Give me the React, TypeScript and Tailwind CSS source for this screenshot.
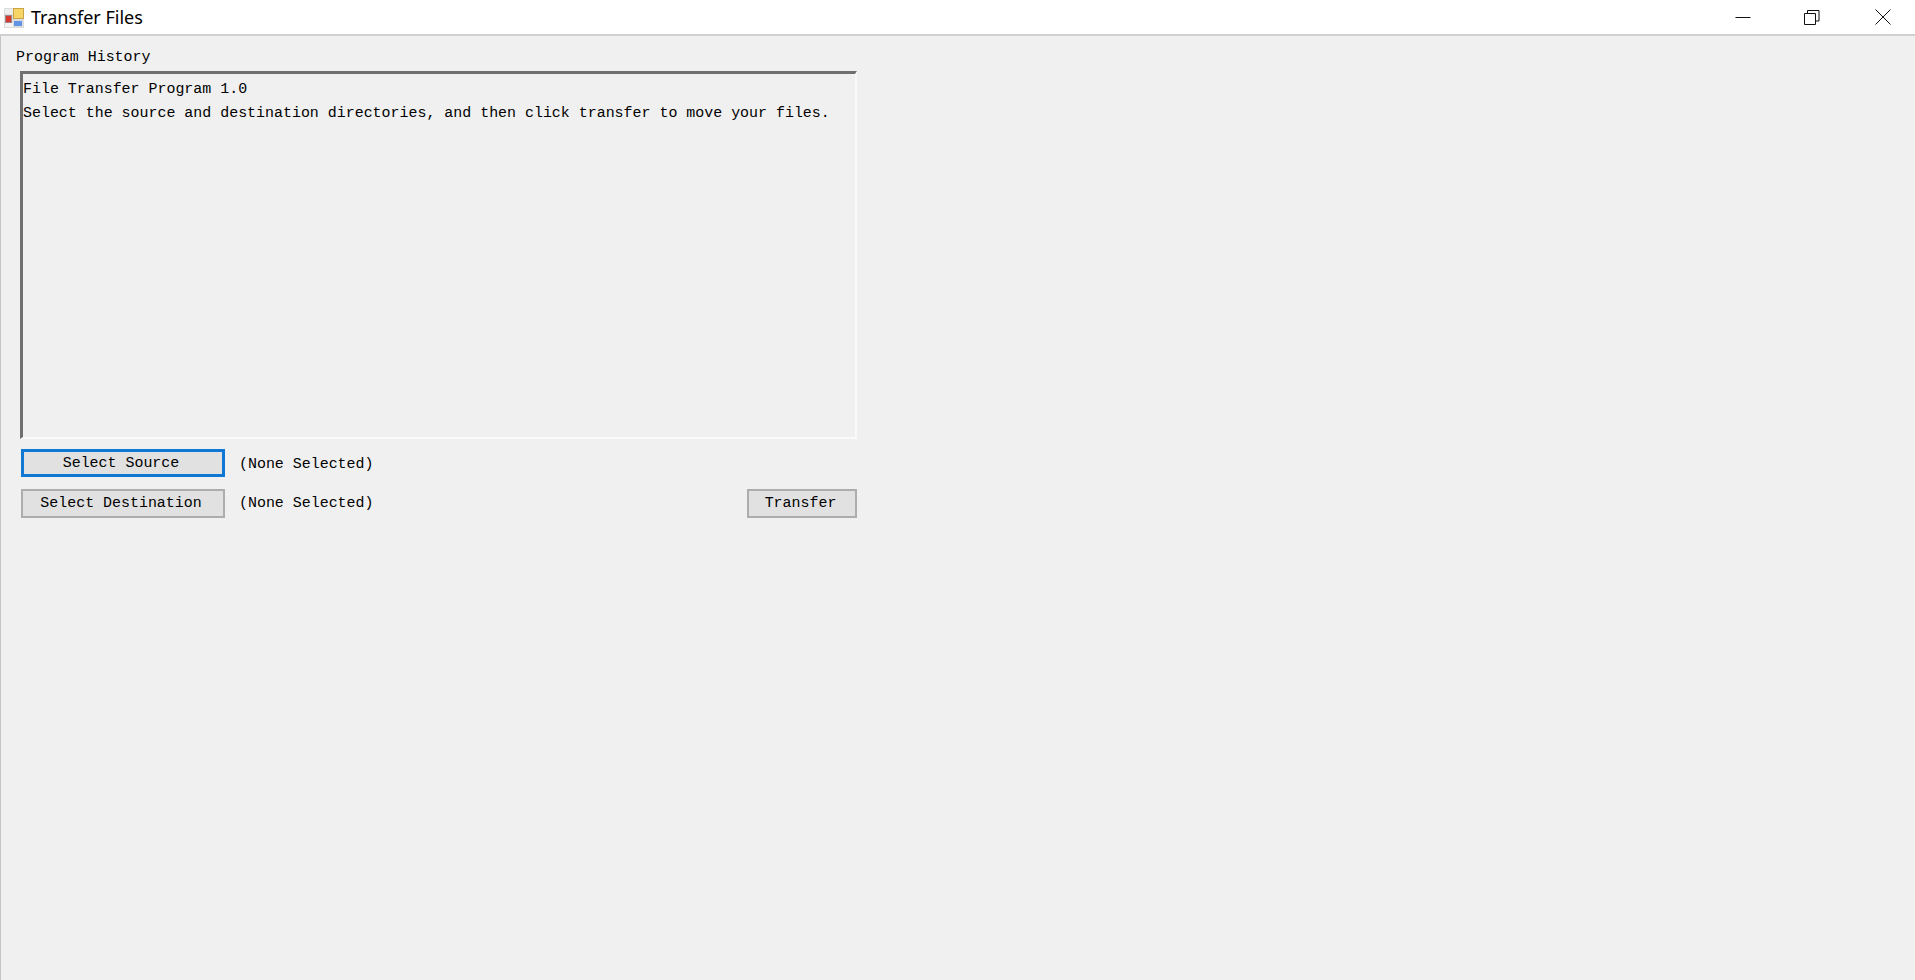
export default function App() {
  const mono = "font-['Liberation_Mono',monospace] text-[14.95px] text-black whitespace-pre";
  const btn = "h-[29px] border-2 border-[#adadad] bg-[#e1e1e1] flex items-center justify-center " + mono;
  return (
    <div className="w-[1915px] h-[980px] flex flex-col bg-[#f0f0f0] overflow-hidden">
      <div className="h-[36px] shrink-0 bg-white border-b-2 border-[#d0d0d0] flex items-center">
        <svg width="22" height="22" viewBox="0 0 22 22" className="ml-[3px] mt-[1px]">
          <rect x="1" y="1" width="20" height="20" fill="#dcdcdc" />
          <rect x="2" y="2" width="8" height="5" fill="#eeeeee" />
          <rect x="2" y="16" width="8" height="4" fill="#f4f4f4" />
          <rect x="2.5" y="8.5" width="6" height="7" fill="#d9362c" stroke="#9c8a8a" />
          <rect x="10.5" y="1.5" width="10" height="10" fill="#f6d465" stroke="#c9a545" />
          <rect x="11" y="14" width="8" height="5" fill="#5f95e2" />
        </svg>
        <span className="ml-[6px] font-['Noto_Sans',sans-serif] text-[18px] text-black">Transfer Files</span>
        <div className="ml-auto flex items-center">
          <div className="w-[70px] h-[34px] flex items-center justify-center">
            <svg width="16" height="16" viewBox="0 0 16 16"><path d="M0.5 8.5H15.5" stroke="#111" fill="none" /></svg>
          </div>
          <div className="w-[68px] h-[34px] flex items-center justify-center">
            <svg width="16" height="16" viewBox="0 0 16 16"><path d="M0.5 4.5H11.5V15.5H0.5ZM3.5 4.5V1.5H15V12H11.5" stroke="#111" fill="none" /></svg>
          </div>
          <div className="w-[64px] ml-[5px] h-[34px] flex items-center justify-center">
            <svg width="16" height="16" viewBox="0 0 16 16"><path d="M0.5 0.5L15.5 15.5M15.5 0.5L0.5 15.5" stroke="#111" fill="none" /></svg>
          </div>
        </div>
      </div>
      <div className="flex-1 border-l border-[#c4c4c4] pl-[15px] pt-[11px] flex flex-col items-start">
        <div className={mono + " leading-[20px]"}>Program History</div>
        <div className="ml-[4px] mt-[4px] w-[837px] h-[368px] border-2 border-t-[3px] border-l-[3px] border-t-[#707070] border-l-[#707070] border-r-[#fafafa] border-b-[#fafafa] pt-[3px]">
          <div className={mono + " leading-[24px]"}>File Transfer Program 1.0</div>
          <div className={mono + " leading-[24px]"}>Select the source and destination directories, and then click transfer to move your files.</div>
        </div>
        <div className="ml-[5px] mt-[10px] w-[836px] flex flex-col gap-[12px]">
          <div className="flex items-center">
            <div className={"h-[28px] w-[204px] pr-[4px] pt-[1px] border-[3px] border-[#0f78d4] bg-[#e1e1e1] flex items-center justify-center " + mono}>Select Source</div>
            <div className={"ml-[14px] pt-[3px] " + mono}>(None Selected)</div>
          </div>
          <div className="flex items-center">
            <div className={btn + " w-[204px] pr-[4px]"}>Select Destination</div>
            <div className={"ml-[14px] " + mono}>(None Selected)</div>
            <div className={btn + " w-[110px] ml-auto pr-[3px]"}>Transfer</div>
          </div>
        </div>
      </div>
    </div>
  );
}
